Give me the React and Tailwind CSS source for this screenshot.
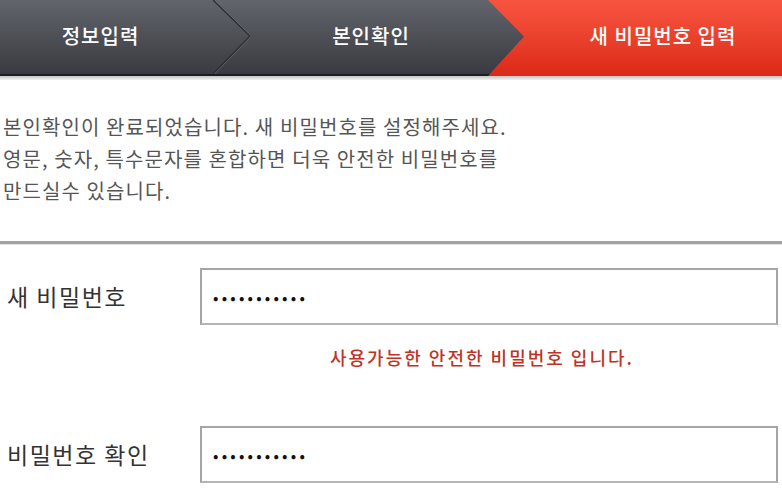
const font = { fontFamily: '"Noto Sans CJK KR", "Noto Sans", sans-serif' }

export default function App() {
  return (
    <div className="w-[782px] h-[490px] bg-white overflow-hidden font-['Noto_Sans_CJK_KR',sans-serif]">
      <StepBar />
      <div className="h-[4px] bg-gradient-to-b from-[#c4c4c4] to-[#f2f2f2]" />

      <p className="pl-[3px] pt-[31px] pb-[34px] text-[20px] leading-[32px] text-[#555] tracking-[1.1px]">
        본인확인이 완료되었습니다. 새 비밀번호를 설정해주세요.
        <br />
        영문, 숫자, 특수문자를 혼합하면 더욱 안전한 비밀번호를
        <br />
        만드실수 있습니다.
      </p>

      <div className="border-t-[3px] border-[#a3a3a3] border-b border-b-[#e2e2e2]" />

      <div className="pt-[23px] pr-[4px]">
        <FieldRow label="새 비밀번호" />
        <div className="pl-[330px] mt-[20px] text-[18px] leading-[24px] font-medium text-[#bf3326] tracking-[2px]">
          사용가능한 안전한 비밀번호 입니다.
        </div>
        <div className="mt-[57px]">
          <FieldRow label="비밀번호 확인" />
        </div>
      </div>
    </div>
  )
}

function StepBar() {
  return (
    <div className="flex h-[76px] bg-gradient-to-b from-[#63656c] to-[#393b41] border-b-2 border-[#1c1d20]">
      <div className="w-[213px] flex items-center justify-center pr-[12px] text-white text-[20px] font-medium tracking-[1px] pb-[2px]">
        정보입력
      </div>
      <svg width="37" height="74" viewBox="0 0 37 74" className="shrink-0">
        <path d="M0 0 L37 36 L0 74" fill="none" stroke="#2e2f34" strokeWidth="1.5" />
        <path d="M1.5 0 L38.5 36 L1.5 74" fill="none" stroke="#6b6d74" strokeWidth="1" opacity="0.7" />
      </svg>
      <div className="flex-1 flex items-center justify-center pl-[4px] text-white text-[20px] font-medium tracking-[1px] pb-[2px]">
        본인확인
      </div>
      <div className="w-[294px] -mb-[2px] flex items-center justify-center pl-[56px] pb-[4px] text-white text-[20px] font-medium tracking-[1px] bg-gradient-to-b from-[#f7553f] to-[#dc2817] [clip-path:polygon(0_0,100%_0,100%_100%,0_100%,36px_48%)]">
        새 비밀번호 입력
      </div>
    </div>
  )
}

function FieldRow({ label }) {
  return (
    <div className="flex items-center">
      <div className="w-[200px] pl-[7px] text-[23px] text-[#333] tracking-[1.5px]">{label}</div>
      <div className="flex-1 h-[57px] border-2 border-[#a5a5a5] border-b-[#b5b5b5] flex items-center pl-[11px] bg-white">
        <span className="text-[16px] leading-none text-[#111] tracking-[3.2px]" style={font}>
          •••••••••••
        </span>
      </div>
    </div>
  )
}
